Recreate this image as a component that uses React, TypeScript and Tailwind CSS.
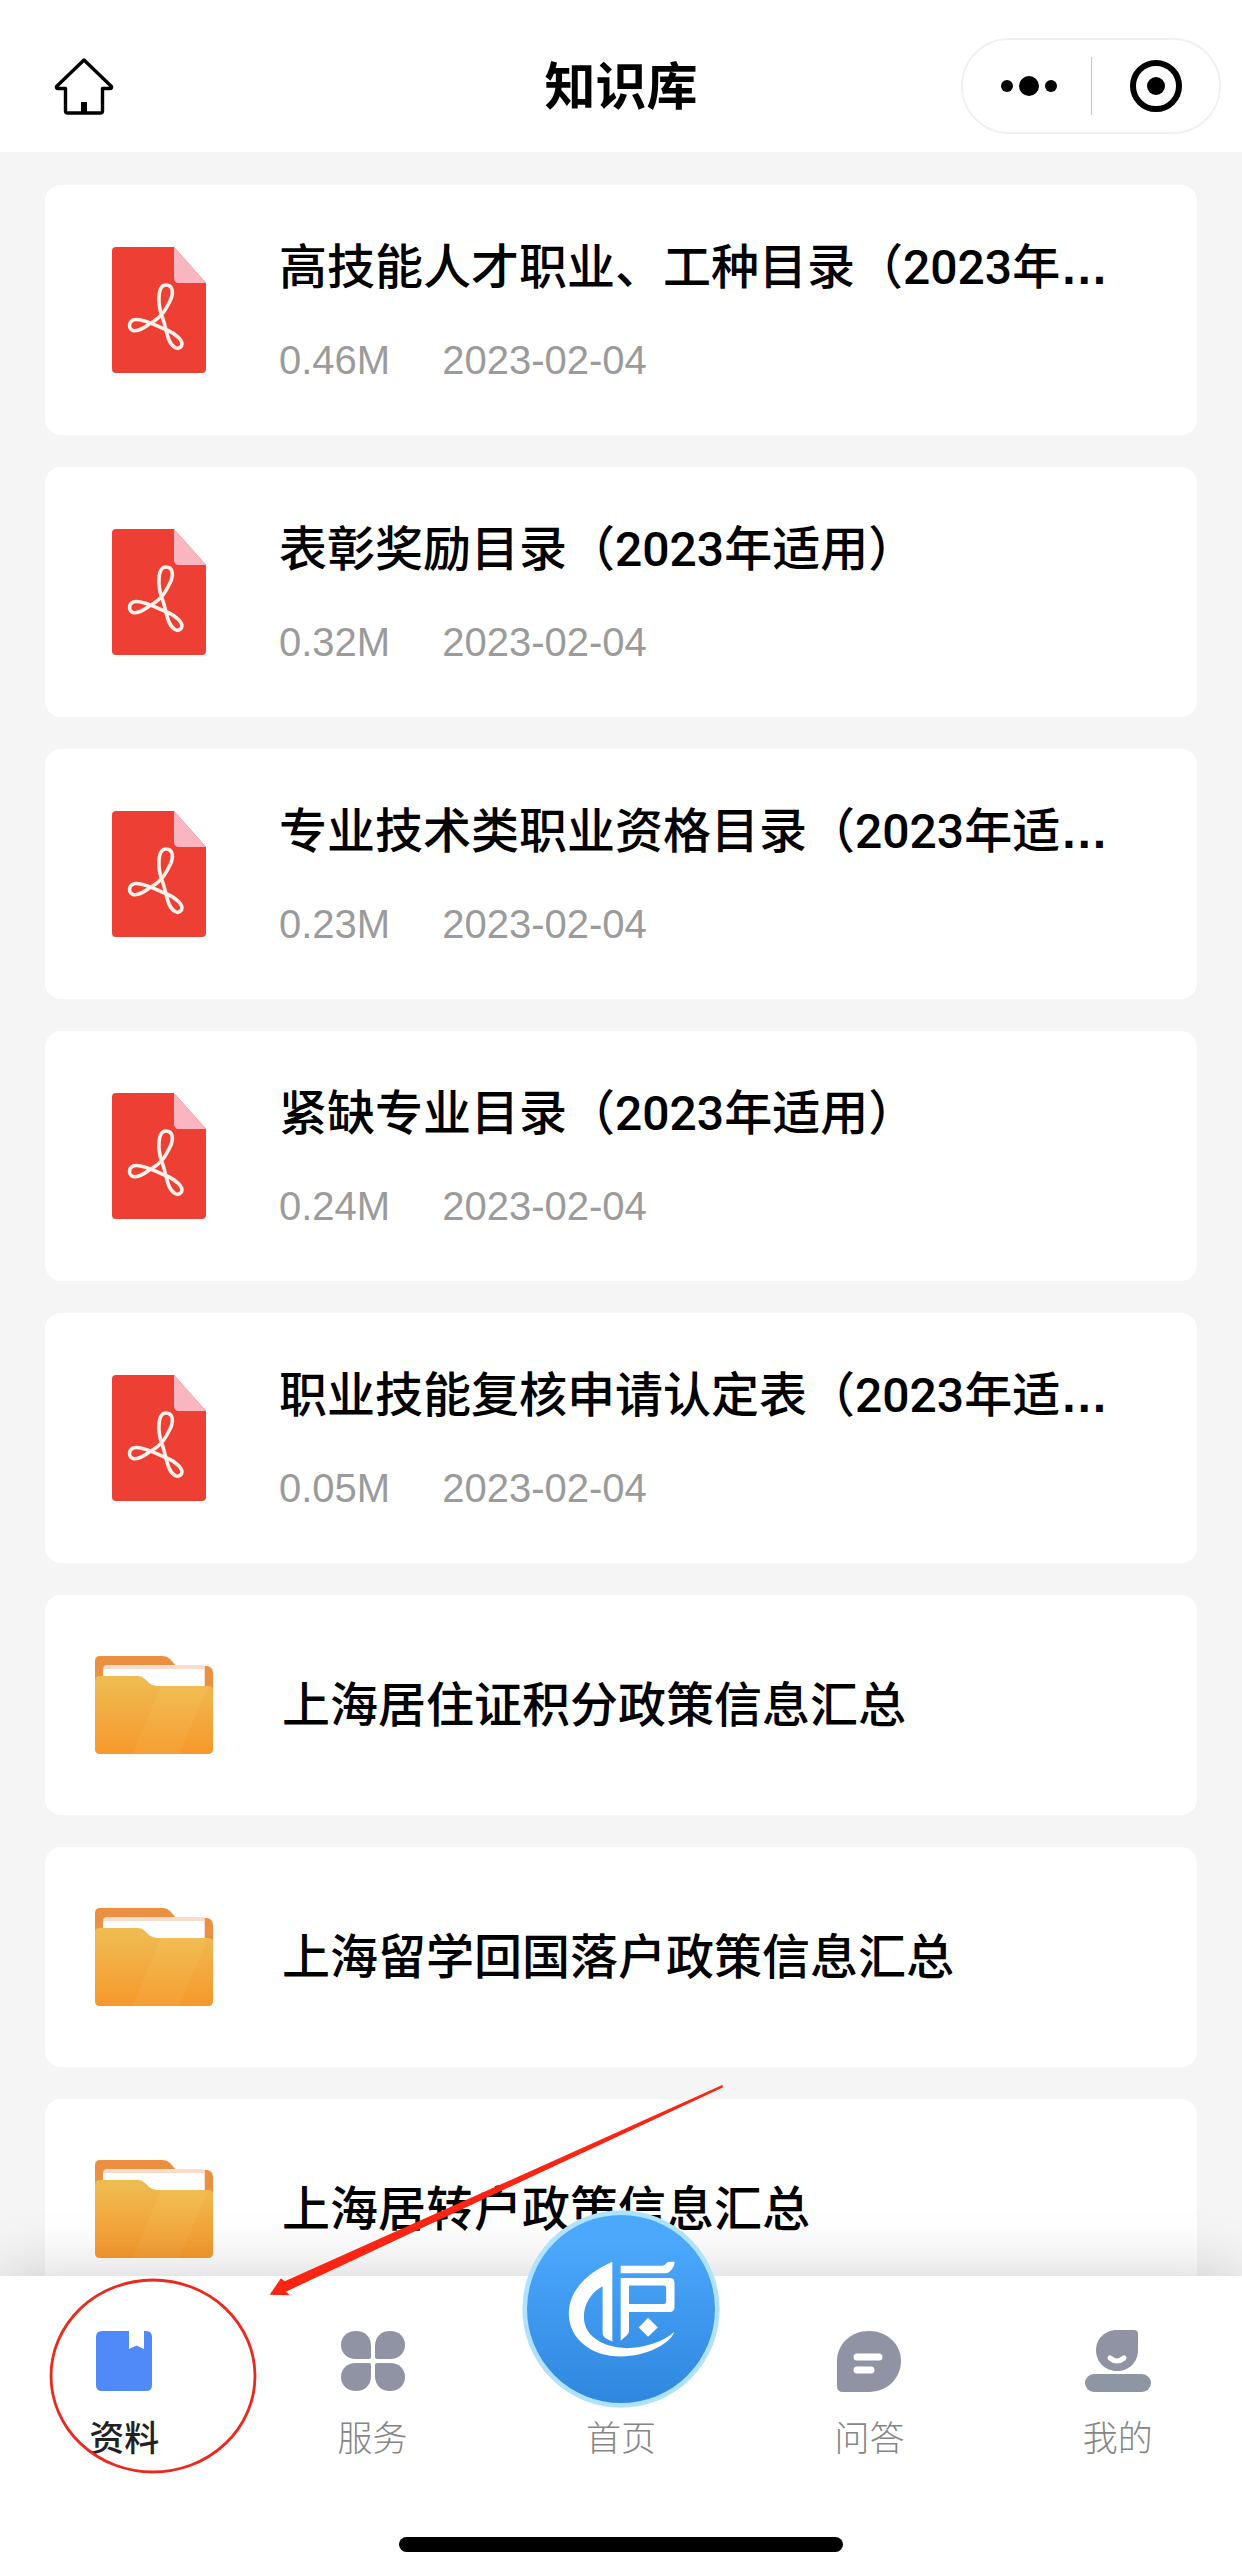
import React from 'react';

const files = [
  { title: '高技能人才职业、工种目录（2023年', more: true, size: '0.46M', date: '2023-02-04' },
  { title: '表彰奖励目录（2023年适用）', size: '0.32M', date: '2023-02-04' },
  { title: '专业技术类职业资格目录（2023年适', more: true, size: '0.23M', date: '2023-02-04' },
  { title: '紧缺专业目录（2023年适用）', size: '0.24M', date: '2023-02-04' },
  { title: '职业技能复核申请认定表（2023年适', more: true, size: '0.05M', date: '2023-02-04' },
];

const folders = ['上海居住证积分政策信息汇总', '上海留学回国落户政策信息汇总', '上海居转户政策信息汇总'];

const HomeIcon = () => (
  <svg viewBox="0 0 60 58" className="w-[60px] h-[58px]" fill="none" stroke="#000" strokeWidth="3.4" strokeLinejoin="round">
    <path d="M30 3 L57.500 29.500 Q58 31.500 56 31.500 H48.500 V54 Q48.500 56 46.500 56 H13.500 Q11.500 56 11.500 54 V31.500 H4 Q2 31.500 2.500 29.500 Z" />
    <path d="M30 45 V56" strokeWidth="6" />
  </svg>
);

const PdfIcon = () => (
  <svg viewBox="0 0 94 126" className="w-[94px] h-[126px] shrink-0">
    <path d="M4 0 H62 L94 36 V122 Q94 126 90 126 H4 Q0 126 0 122 V4 Q0 0 4 0 Z" fill="#ed3f33" />
    <path d="M62 0 L94 36 H67 Q62 36 62 31 Z" fill="#fab6c0" />
    <path
      d="M54 38 C61 38 62 46 58 54 C54 62 50 70 39 76 C34 79 28 85 21 83.5 C16 82 16 73 24 72.5 C34 72 46 80 56 83.5 C64 87 72 94 69.5 99 C66 104 60 100 57 93 C54 86 53 76 49.5 68 C46 57 45 38 54 38 Z"
      fill="none"
      stroke="#fff2ea"
      strokeWidth="3.6"
      strokeLinejoin="round"
    />
  </svg>
);

const FolderIcon = () => (
  <svg viewBox="0 0 118 100" className="w-[118px] h-[100px] shrink-0">
    <defs>
      <linearGradient id="folder-front" x1="0" y1="0" x2="0" y2="1">
        <stop offset="0" stopColor="#eebd52" />
        <stop offset="1" stopColor="#f7982c" />
      </linearGradient>
      <linearGradient id="folder-shine" x1="0" y1="0" x2="0" y2="1">
        <stop offset="0" stopColor="#f2bf55" />
        <stop offset="1" stopColor="#f5a136" />
      </linearGradient>
    </defs>
    <path d="M5 1 H68 Q72 1 75 4 L81 11 H112 Q118 12 118 18 V60 H0 V6 Q0 1 5 1 Z" fill="#ea9040" />
    <path d="M12 10 H107 Q110 10 110 13 V50 H8 V14 Q8 10 12 10 Z" fill="#f9dccb" />
    <path d="M11 14 H107 Q109 14 109 16 V50 H8 V16 Q8 14 11 14 Z" fill="#fff" />
    <path d="M5 21 H43 Q47 21 50 24 L54 28 Q58 31 62 31 H113 Q118 31 118 35 V94 Q118 99 113 99 H5 Q0 99 0 94 V25 Q0 21 5 21 Z" fill="url(#folder-front)" />
    <path d="M66 31 H113 L84 99 H38 Z" fill="url(#folder-shine)" opacity="0.7" />
  </svg>
);

const LogoIcon = () => (
  <svg viewBox="127 150 592 592" className="w-[198px] h-[198px]">
    <defs>
      <linearGradient id="logo-bg" x1="0" y1="0" x2="0" y2="1">
        <stop offset="0.15" stopColor="#4ba8fb" />
        <stop offset="1" stopColor="#2f86de" />
      </linearGradient>
    </defs>
    <circle cx="423" cy="446" r="288" fill="url(#logo-bg)" stroke="#aee2fe" strokeWidth="14" />
    <g fill="#fff">
      <path d="M397 305 C330 335 267 385 267 460 C267 535 335 588 422 588 C500 588 570 550 582 515 C550 545 490 563 440 563 C365 560 312 525 312 470 C312 430 335 395 368 378 V518 Q368 528 378 534 L397 543 Z" />
      <path d="M422 317 H546 Q555 316 560 308 Q563 304 583 305 Q584 316 578 323 L570 333 Q565 339 556 339 H422 Z" />
      <path fillRule="evenodd" d="M422 353 H569 Q583 353 583 367 V441 Q583 455 569 455 H447 V512 Q447 518 442 523 L422 541 Z M447 376 V431 H551 Q558 431 558 424 V383 Q558 376 551 376 Z" />
      <path d="M504 472 L533 501 L504 529 L476 501 Z" />
    </g>
  </svg>
);

const BookIcon = () => (
  <svg viewBox="0 0 56 62" className="w-[56px] h-[62px]">
    <path d="M6 1 H50 Q56 1 56 7 V55 Q56 61 50 61 H6 Q0 61 0 55 V7 Q0 1 6 1 Z" fill="#4f8af8" />
    <path d="M33 0 H48 V19 L40.500 15.500 L33 19 Z" fill="#fff" />
  </svg>
);

const ServiceIcon = () => (
  <svg viewBox="0 0 64 62" className="w-[64px] h-[62px]" fill="#9093a4">
    <path d="M15 1 C24 1 30 7 30 16 V27 Q30 29 28 29 H15 C6 29 0 23 0 15 C0 7 6 1 15 1 Z" />
    <path d="M49 1 C40 1 34 7 34 16 V27 Q34 29 36 29 H49 C58 29 64 23 64 15 C64 7 58 1 49 1 Z" />
    <path d="M15 61 C24 61 30 55 30 46 V35 Q30 33 28 33 H15 C6 33 0 39 0 47 C0 55 6 61 15 61 Z" />
    <path d="M49 61 C40 61 34 55 34 46 V35 Q34 33 36 33 H49 C58 33 64 39 64 47 C64 55 58 61 49 61 Z" />
  </svg>
);

const ChatIcon = () => (
  <svg viewBox="0 0 64 62" className="w-[64px] h-[62px]">
    <path d="M32 1 C50 1 64 14 64 31 C64 48 50 62 32 62 H6 Q0 62 0 56 V31 C0 14 14 1 32 1 Z" fill="#9093a4" />
    <path d="M20 27 H42 M20 40 H34" stroke="#fff" strokeWidth="7" strokeLinecap="round" />
  </svg>
);

const MineIcon = () => (
  <svg viewBox="0 0 66 62" className="w-[66px] h-[62px]">
    <path d="M32 0 H49 Q53 0 53 4 V20 C53 33 43 41 32 41 C20 41 11 32 11 20 C11 9 20 0 32 0 Z" fill="#9093a4" />
    <path d="M25 28 Q32 34 39 28" fill="none" stroke="#fff" strokeWidth="5" strokeLinecap="round" />
    <rect x="0" y="44" width="66" height="18" rx="9" fill="#8e95a3" />
  </svg>
);

const tabs = [
  { label: '资料', icon: <BookIcon />, active: true },
  { label: '服务', icon: <ServiceIcon /> },
  { label: '首页', icon: null },
  { label: '问答', icon: <ChatIcon /> },
  { label: '我的', icon: <MineIcon /> },
];

const Header = () => (
  <header className="grid shrink-0 grid-cols-[1fr_auto_1fr] items-center bg-white px-[21px] pt-[38px] pb-[18px]">
    <button type="button" aria-label="首页" className="ml-[33px] w-[60px]">
      <HomeIcon />
    </button>
    <h1 className="pt-1 text-center text-[51px] leading-[60px] font-bold">知识库</h1>
    <div className="flex h-[96px] w-[260px] items-center justify-self-end rounded-full border-2 border-[#f0f0f0]">
      <button type="button" aria-label="更多" className="flex w-[128px] items-center justify-center gap-[6px] pl-1">
        <span className="h-3 w-3 rounded-full bg-black"></span>
        <span className="h-5 w-5 rounded-full bg-black"></span>
        <span className="h-3 w-3 rounded-full bg-black"></span>
      </button>
      <div className="h-[58px] w-px bg-[#c8c8c8]"></div>
      <button type="button" aria-label="关闭" className="flex flex-1 items-center justify-center">
        <span className="flex h-[52px] w-[52px] items-center justify-center rounded-full border-[6px] border-black">
          <span className="h-[18px] w-[18px] rounded-full bg-black"></span>
        </span>
      </button>
    </div>
  </header>
);

const FileItem = ({ title, more, size, date }) => {
  return (
    <li>
      <a href="#" className="flex h-[250px] items-center gap-[73px] rounded-2xl bg-white pl-[67px] pr-[74px]">
        <PdfIcon />
        <div className="min-w-0 flex-1 pt-1">
          <p className="whitespace-nowrap text-[48px] leading-[64px] font-medium">
            {title}
            {more && <span className="font-['Liberation_Sans',sans-serif] font-bold">…</span>}
          </p>
          <p className="mt-8 flex gap-[52px] font-['Liberation_Sans',sans-serif] text-[40px] leading-[56px] text-[#9b9b9b]">
            <span>{size}</span>
            <span>{date}</span>
          </p>
        </div>
      </a>
    </li>
  );
};

const FolderItem = ({ title }) => {
  return (
    <li>
      <a href="#" className="flex h-[220px] items-center gap-[69px] rounded-2xl bg-white pl-[50px] pr-[74px]">
        <FolderIcon />
        <p className="whitespace-nowrap pt-0.5 text-[48px] leading-[64px] font-medium">{title}</p>
      </a>
    </li>
  );
};

const TabItem = ({ label, icon, active }) => {
  return (
    <li className="relative flex-1">
      <a href="#" className="flex flex-col items-center pt-[54px]">
        {icon ? (
          icon
        ) : (
          <>
            <span className="absolute -top-[66px]">
              <LogoIcon />
            </span>
            <span className="h-[62px]"></span>
          </>
        )}
        <span className={active ? 'mt-6 text-[35px] leading-[48px] font-medium text-[#222]' : 'mt-6 text-[35px] leading-[48px] font-light text-[#868686]'}>
          {label}
        </span>
      </a>
    </li>
  );
};

// red circle around the first tab and the arrow that points to it
const Marker = () => (
  <svg viewBox="0 0 740 500" className="pointer-events-none absolute bottom-0 left-0 h-[500px] w-[740px]">
    <ellipse cx="153" cy="300" rx="102" ry="96" fill="none" stroke="#ea2a1e" strokeWidth="2.8" />
    <path d="M722 10 L285 206 L281 203.500 L271 218 L288 218.500 L284.500 215.500 L722 11 Z" fill="#fc2413" stroke="#fc2413" strokeWidth="1.4" />
  </svg>
);

const App = () => {
  return (
    <div className="flex h-screen flex-col overflow-hidden bg-[#f5f5f5] font-['Roboto','Noto_Sans_CJK_SC',sans-serif] text-black">
      <Header />
      <main className="min-h-0 flex-1 px-[45px] pt-[33px]">
        <ul className="flex flex-col gap-8">
          {files.map((file) => (
            <FileItem key={file.title} {...file} />
          ))}
          {folders.map((title) => (
            <FolderItem key={title} title={title} />
          ))}
        </ul>
      </main>
      <nav className="relative shrink-0 bg-white shadow-[0_0_60px_rgba(20,20,40,0.2)]">
        <ul className="flex">
          {tabs.map((tab) => (
            <TabItem key={tab.label} label={tab.label} icon={tab.icon} active={tab.active} />
          ))}
        </ul>
        <div className="mx-auto mt-[73px] mb-6 h-[15px] w-[444px] rounded-full bg-black"></div>
        <Marker />
      </nav>
    </div>
  );
};

export default App;
